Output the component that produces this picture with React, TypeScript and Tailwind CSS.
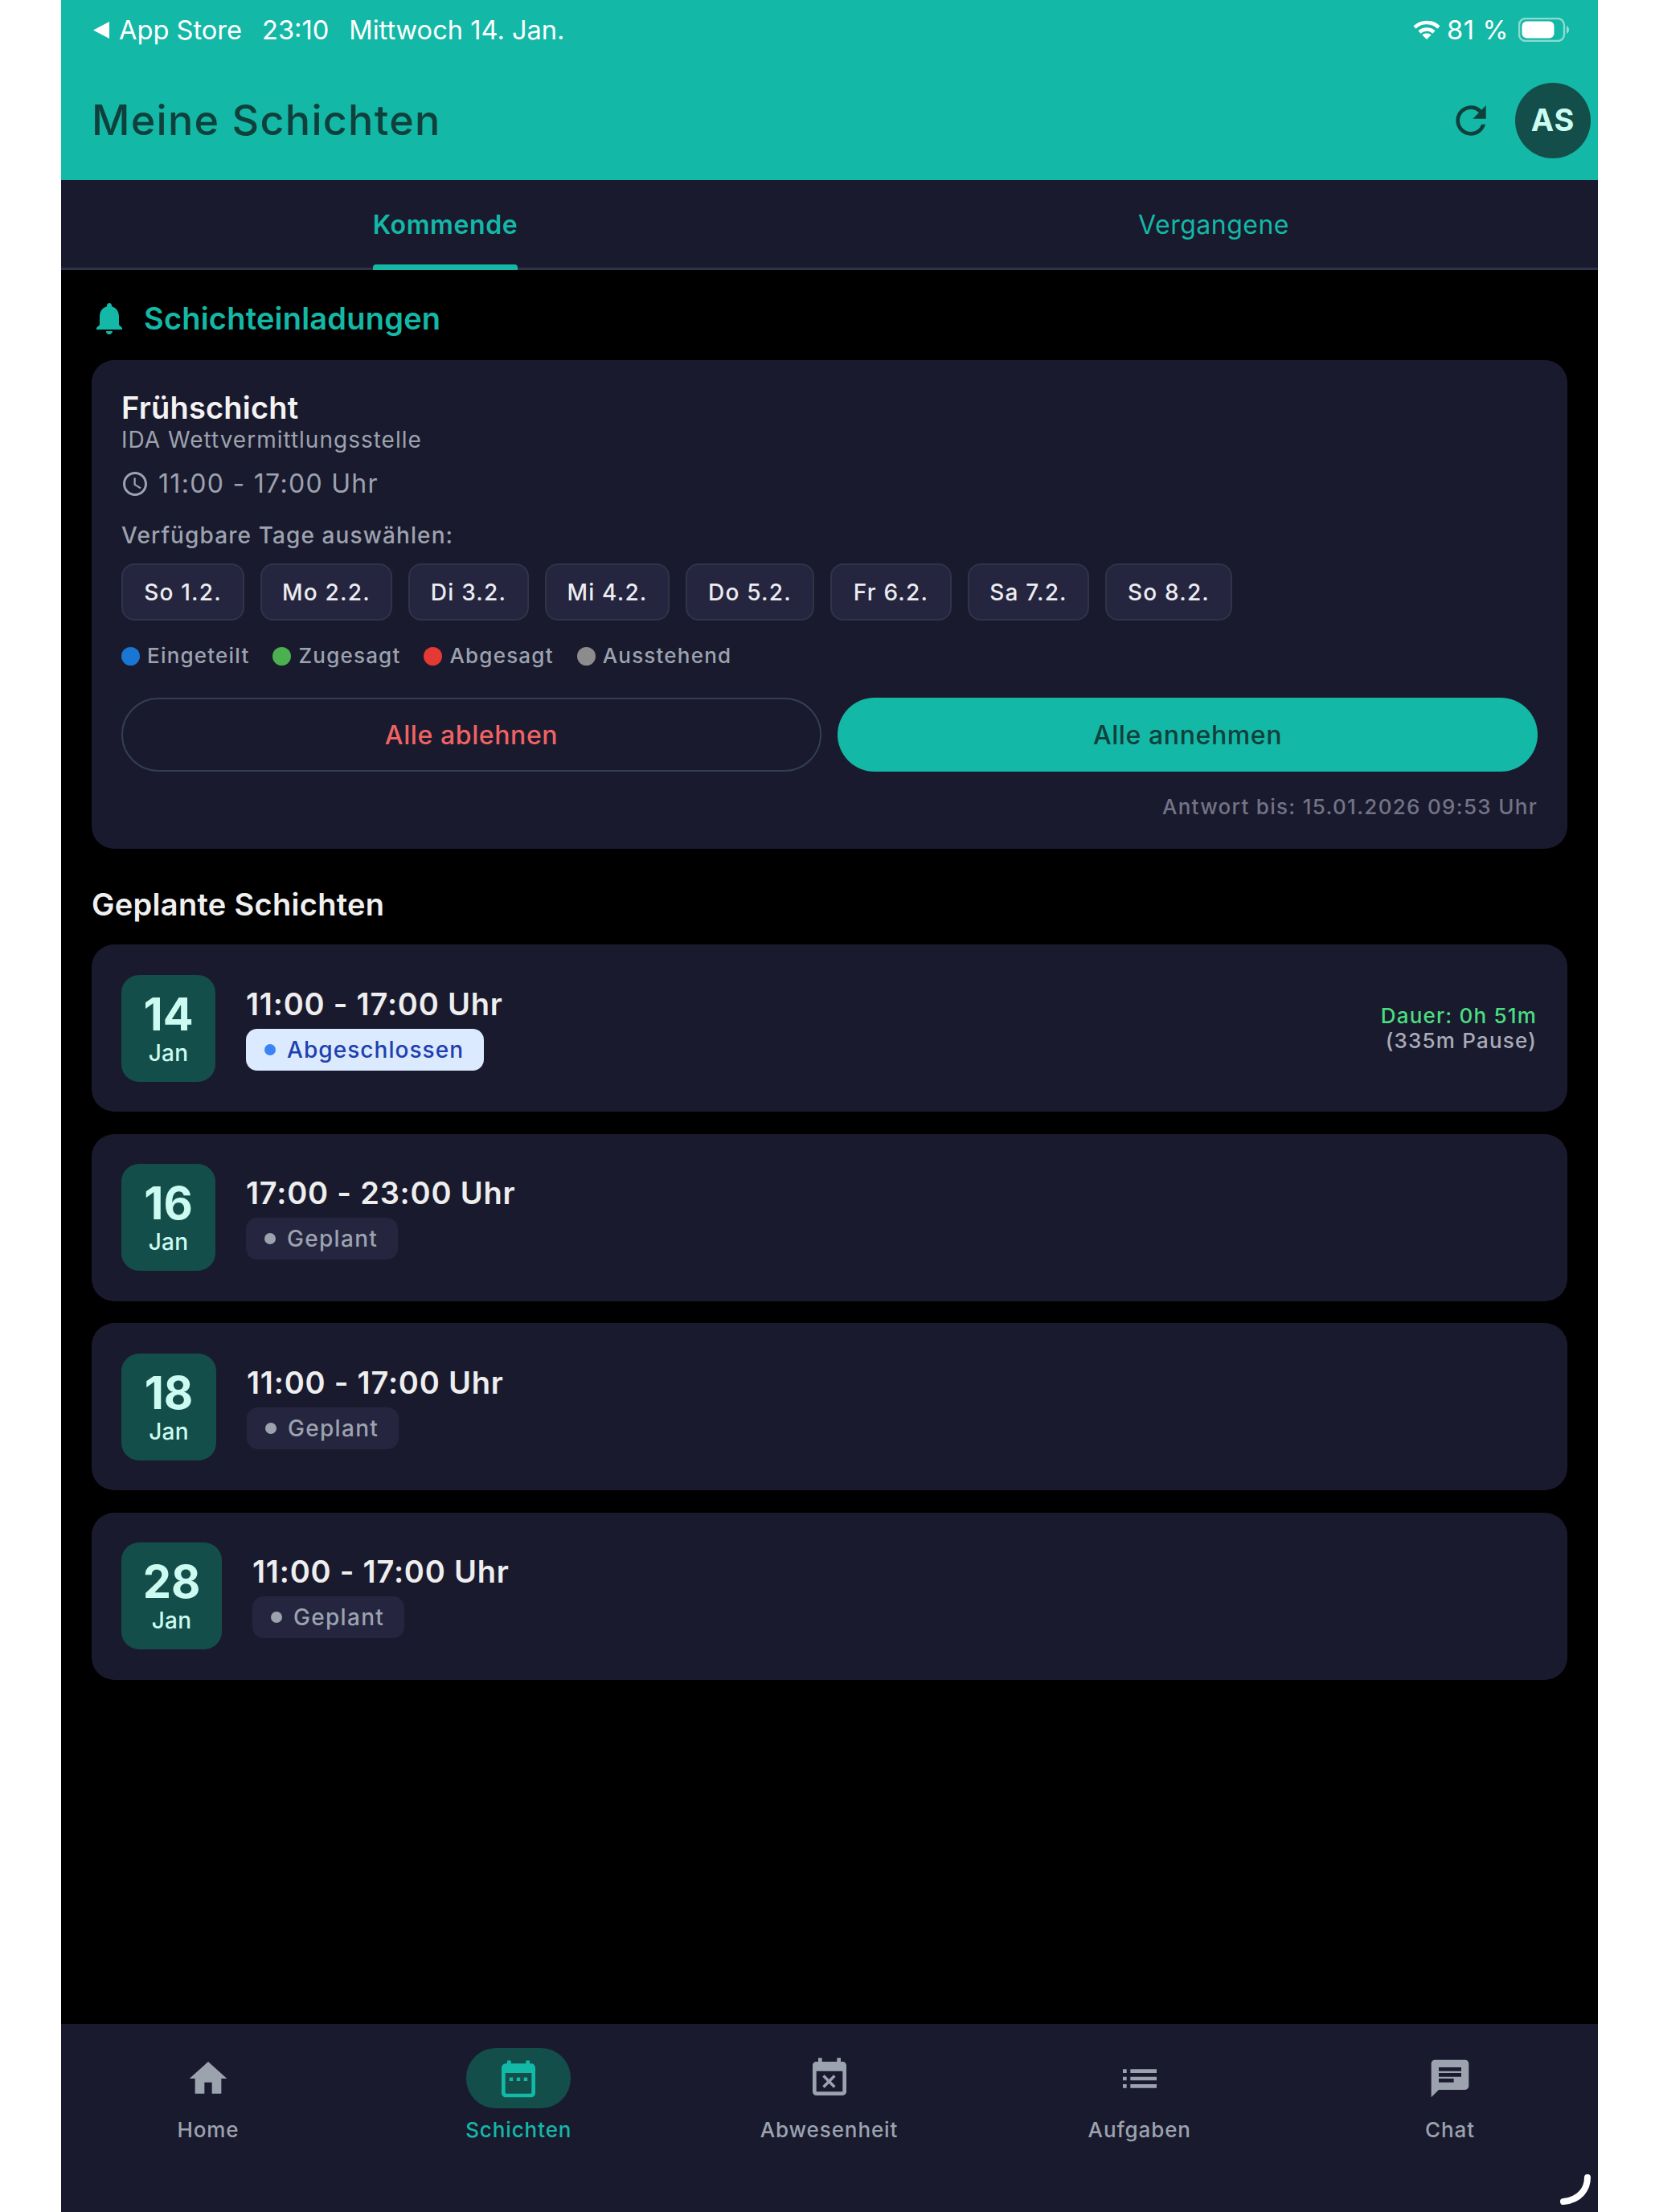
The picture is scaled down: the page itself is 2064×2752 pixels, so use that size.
import { MdHome, MdEventBusy, MdList, MdChat, MdRefresh, MdNotifications, MdAccessTime } from "react-icons/md";

const font = { fontFamily: "Inter, 'Liberation Sans', sans-serif" };

function DayChip({ label, w }: { label: string; w: string }) {
  return (
    <div className={`${w} h-[71px] flex items-center justify-center rounded-[16px] border-2 border-[#2f3449] bg-[#25253f] text-[28px] font-medium tracking-[1.2px] text-[#ececf0]`}>
      {label}
    </div>
  );
}

function Legend({ color, label }: { color: string; label: string }) {
  return (
    <div className="flex items-center gap-[9px]">
      <span className={`w-[23px] h-[23px] rounded-full ${color}`} />
      <span className="text-[26px] leading-[32px] font-medium tracking-[1.2px] text-[#9ca3af]">{label}</span>
    </div>
  );
}

function ShiftCard({ day, time, done, boxW, extra }: { day: string; time: string; done?: boolean; boxW: string; extra?: boolean }) {
  return (
    <div className="h-[208px] rounded-[28px] bg-[#1a1a2e] pl-[37px] pr-[38px] flex items-center">
      <div className={`${boxW} h-[133px] shrink-0 rounded-[22px] bg-[#134e4a] flex flex-col items-center pt-[21px]`}>
        <span className="text-[56px] leading-[56px] font-bold text-[#ccfbf1]">{day}</span>
        <span className="mt-[3px] text-[28px] leading-[34px] font-medium tracking-[0.3px] text-[#ccfbf1]">Jan</span>
      </div>
      <div className="ml-[38px] flex flex-col items-start">
        <span className="text-[38px] leading-[44px] font-semibold tracking-[0.8px] text-[#eeeeee]">{time}</span>
        {done ? (
          <div className="mt-[9px] h-[52px] rounded-[14px] bg-[#dbeafe] pl-[23px] pr-[25px] flex items-center gap-[14px]">
            <span className="w-[14px] h-[14px] rounded-full bg-[#3b82f6]" />
            <span className="text-[28px] font-medium tracking-[1.05px] text-[#1e40af]">Abgeschlossen</span>
          </div>
        ) : (
          <div className="mt-[9px] h-[52px] rounded-[14px] bg-[#25253f] pl-[23px] pr-[25px] flex items-center gap-[14px]">
            <span className="w-[14px] h-[14px] rounded-full bg-[#9ca3af]" />
            <span className="text-[28px] font-medium tracking-[1.3px] text-[#9ca3af]">Geplant</span>
          </div>
        )}
      </div>
      {extra && (
        <div className="ml-auto flex flex-col items-end text-[26px] leading-[31px] font-medium tracking-[1.2px]">
          <span className="text-[#4ade80]">Dauer: 0h 51m</span>
          <span className="text-[#a9acb8]">(335m Pause)</span>
        </div>
      )}
    </div>
  );
}

function NavItem({ icon, label, active }: { icon: React.ReactNode; label: string; active?: boolean }) {
  return (
    <div className="w-[300px] flex flex-col items-center">
      <div className={`w-[130px] h-[75px] rounded-[37px] flex items-center justify-center ${active ? "bg-[#134e4a] text-[#14b8a6]" : "text-[#9ca3af]"}`}>
        {icon}
      </div>
      <span className={`mt-[10px] text-[26px] leading-[34px] font-medium tracking-[0.9px] ${active ? "text-[#14b8a6]" : "text-[#9ca3af]"}`}>{label}</span>
    </div>
  );
}

function CalendarIcon() {
  return (
    <svg width="56" height="56" viewBox="0 0 24 24" fill="currentColor">
      <path d="M19 4h-1V2.4h-2V4H8V2.4H6V4H5.4C4 4 3 5 3 6.4v13.2C3 21 4 22 5.4 22h13.2c1.4 0 2.4-1 2.4-2.4V6.4C21 5 20 4 19 4zm0 15.4c0 .4-.2.6-.6.6H5.6c-.4 0-.6-.2-.6-.6V9h14v10.4z" />
      <rect x="7.2" y="11.4" width="1.9" height="1.9" />
      <rect x="11.05" y="11.4" width="1.9" height="1.9" />
      <rect x="14.9" y="11.4" width="1.9" height="1.9" />
    </svg>
  );
}

export default function App() {
  return (
    <div className="w-[2064px] h-[2752px] bg-white" style={font}>
      <div className="relative ml-[76px] w-[1912px] h-[2752px] bg-black flex flex-col overflow-hidden">
        {/* Header */}
        <header className="h-[224px] shrink-0 bg-[#14b8a6] flex flex-col">
          <div className="h-[75px] pl-[39px] pr-[35px] flex items-center text-[32.6px] text-white">
            <svg width="22" height="21" viewBox="0 0 22 21" className="mr-[11px]" fill="white">
              <path d="M21 0v21L1 10.5z" />
            </svg>
            <span>App Store</span>
            <span className="ml-[25px]">23:10</span>
            <span className="ml-[25px]">Mittwoch 14. Jan.</span>
            <div className="ml-auto flex items-center">
              <svg width="34" height="24" viewBox="0 0 34 24" fill="none" stroke="white" strokeWidth="4.6">
                <path d="M2 9c8.5-8 21.5-8 30 0" />
                <path d="M8 15c5-4.6 13-4.6 18 0" />
                <path d="M17 24l-5.6-5.6c3-2.6 8.2-2.6 11.2 0z" fill="white" stroke="none" />
              </svg>
              <span className="ml-[8px] tracking-[0.6px]">81 %</span>
              <svg width="64" height="30" viewBox="0 0 64 30" fill="none" className="ml-[12px]">
                <rect x="1" y="1" width="56" height="28" rx="8" stroke="white" strokeOpacity="0.5" strokeWidth="2.4" />
                <rect x="4.5" y="4.5" width="40" height="21" rx="6" fill="white" />
                <path d="M60 10c2 1 3 3 3 5s-1 4-3 5z" fill="white" fillOpacity="0.55" />
              </svg>
            </div>
          </div>
          <div className="flex-1 pl-[38px] pr-[9px] flex items-center">
            <h1 className="text-[52px] font-medium tracking-[1.3px] text-[#0f403c]">Meine Schichten</h1>
            <MdRefresh size={56} className="ml-auto text-[#0f403c]" />
            <div className="ml-[27px] w-[94px] h-[94px] rounded-full bg-[#134e4a] flex items-center justify-center text-[38px] font-bold tracking-[1px] text-[#ccfbf1]">
              AS
            </div>
          </div>
        </header>

        {/* Tabs */}
        <nav className="h-[112px] shrink-0 bg-[#1a1a2e] border-b-[3px] border-[#2d3348] grid grid-cols-2">
          <div className="relative flex items-center justify-center">
            <div className="relative h-full flex items-center pt-[2px]">
              <span className="text-[32px] font-semibold tracking-[0.6px] text-[#14b8a6]">Kommende</span>
              <span className="absolute left-0 right-0 bottom-[-3px] h-[7px] rounded-t-[4px] bg-[#14b8a6]" />
            </div>
          </div>
          <div className="flex items-center justify-center pt-[2px]">
            <span className="text-[32px] tracking-[0.5px] text-[#14b8a6]">Vergangene</span>
          </div>
        </nav>

        {/* Content */}
        <main className="flex-1 px-[38px] pt-[30px]">
          <div className="h-[60px] flex items-center">
            <MdNotifications size={48} className="ml-[-2px] text-[#14b8a6]" />
            <span className="ml-[19px] text-[38px] font-semibold tracking-[0.2px] text-[#14b8a6]">Schichteinladungen</span>
          </div>

          <section className="mt-[22px] rounded-[28px] bg-[#1a1a2e] px-[37px] pt-[36px] pb-[36px]">
            <div className="text-[38px] leading-[46px] font-semibold tracking-[0.2px] text-[#f3f3f3]">Frühschicht</div>
            <div className="text-[28px] leading-[34px] tracking-[1px] text-[#9ca3af]">IDA Wettvermittlungsstelle</div>
            <div className="mt-[19px] h-[38px] flex items-center">
              <MdAccessTime size={36} className="ml-[-1px] text-[#9ca3af]" />
              <span className="ml-[11px] text-[32px] tracking-[1.3px] text-[#9ca3af]">11:00 - 17:00 Uhr</span>
            </div>
            <div className="mt-[28px] text-[28px] leading-[34px] font-medium tracking-[1.1px] text-[#9ca3af]">Verfügbare Tage auswählen:</div>
            <div className="mt-[18px] flex gap-[20px]">
              <DayChip label="So 1.2." w="w-[153px]" />
              <DayChip label="Mo 2.2." w="w-[164px]" />
              <DayChip label="Di 3.2." w="w-[150px]" />
              <DayChip label="Mi 4.2." w="w-[155px]" />
              <DayChip label="Do 5.2." w="w-[160px]" />
              <DayChip label="Fr 6.2." w="w-[151px]" />
              <DayChip label="Sa 7.2." w="w-[151px]" />
              <DayChip label="So 8.2." w="w-[158px]" />
            </div>
            <div className="mt-[28px] h-[32px] flex items-center gap-[29px]">
              <Legend color="bg-[#1976d2]" label="Eingeteilt" />
              <Legend color="bg-[#4caf50]" label="Zugesagt" />
              <Legend color="bg-[#e53935]" label="Abgesagt" />
              <Legend color="bg-[#8c8c8c]" label="Ausstehend" />
            </div>
            <div className="mt-[36px] grid grid-cols-2 gap-[20px]">
              <div className="h-[92px] pt-[2px] rounded-full border-2 border-[#333f50] flex items-center justify-center text-[32px] font-medium tracking-[0.6px] text-[#f06363]">
                Alle ablehnen
              </div>
              <div className="h-[92px] pt-[2px] rounded-full bg-[#14b8a6] flex items-center justify-center text-[32px] font-medium tracking-[0.6px] text-[#0f403c]">
                Alle annehmen
              </div>
            </div>
            <div className="mt-[28px] text-right text-[26px] leading-[32px] font-medium tracking-[1.3px] text-[#737386]">
              Antwort bis: 15.01.2026 09:53 Uhr
            </div>
          </section>

          <h2 className="mt-[46px] text-[38px] leading-[46px] font-semibold tracking-[0.3px] text-[#f0f0f0]">Geplante Schichten</h2>

          <div className="mt-[27px] flex flex-col gap-[27.5px]">
            <ShiftCard day="14" time="11:00 - 17:00 Uhr" done extra boxW="w-[117px]" />
            <ShiftCard day="16" time="17:00 - 23:00 Uhr" boxW="w-[117px]" />
            <ShiftCard day="18" time="11:00 - 17:00 Uhr" boxW="w-[118px]" />
            <ShiftCard day="28" time="11:00 - 17:00 Uhr" boxW="w-[125px]" />
          </div>
        </main>

        {/* Bottom nav */}
        <footer className="h-[234px] shrink-0 bg-[#1a1a2e] pl-[33px] pr-[34px] pt-[30px] flex justify-between">
          <NavItem icon={<MdHome size={56} />} label="Home" />
          <NavItem icon={<CalendarIcon />} label="Schichten" active />
          <NavItem icon={<MdEventBusy size={56} />} label="Abwesenheit" />
          <NavItem icon={<MdList size={56} />} label="Aufgaben" />
          <NavItem icon={<MdChat size={56} />} label="Chat" />
        </footer>

        {/* iPad corner mark */}
        <svg className="absolute left-[1864px] top-[2704px]" width="40" height="40" viewBox="0 0 40 40" fill="none">
          <path d="M35 5c0 14-9 28-30 30" stroke="white" strokeWidth="8" strokeLinecap="round" />
        </svg>
      </div>
    </div>
  );
}
